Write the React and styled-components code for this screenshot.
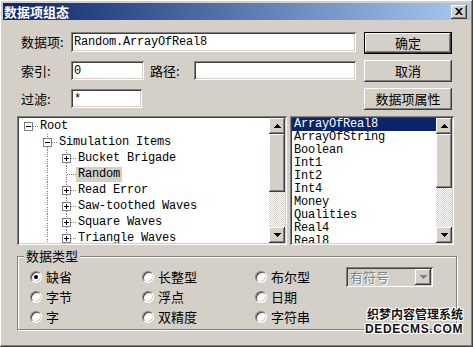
import React from "react";
import styled, { createGlobalStyle, css } from "styled-components";

const ui = `"Noto Sans CJK SC", "Liberation Sans", sans-serif`;
const mono = `"Liberation Mono", "Noto Sans CJK SC", monospace`;

const GlobalStyle = createGlobalStyle`
  html, body { margin: 0; padding: 0; background: #d4d0c8; }
  body { width: 473px; height: 347px; overflow: hidden; }
`;

const raised = css`
  background: #d4d0c8;
  box-shadow: inset -1px -1px #404040, inset 1px 1px #ffffff,
    inset -2px -2px #808080, inset 2px 2px #d4d0c8;
`;

const sunken = css`
  box-shadow: inset 1px 1px #808080, inset -1px -1px #ffffff,
    inset 2px 2px #404040, inset -2px -2px #d4d0c8;
`;

const Window = styled.div`
  position: relative;
  box-sizing: border-box;
  width: 473px;
  height: 347px;
  padding: 3px;
  display: flex;
  flex-direction: column;
  ${raised}
  font-family: ${ui};
  font-size: 13px;
  color: #000;
`;

const TitleBar = styled.div`
  height: 17px;
  display: flex;
  align-items: center;
  justify-content: space-between;
  padding: 0 3px 0 1px;
  background: linear-gradient(to right, #0a246a, #a6caf0);
  color: #fff;
  font-weight: bold;
  font-size: 13px;
  line-height: 17px;
`;

const CloseButton = styled.div`
  width: 16px;
  height: 14px;
  box-sizing: border-box;
  ${raised}
  display: flex;
  align-items: center;
  justify-content: center;
`;

const Body = styled.div`
  flex: 1;
  display: flex;
  flex-direction: column;
  padding: 12px 13px 0 14px;
`;

const TopSection = styled.div`
  display: flex;
  justify-content: space-between;
`;

const Fields = styled.div`
  width: 339px;
  display: flex;
  flex-direction: column;
  gap: 9px;
`;

const FieldRow = styled.div`
  display: flex;
  align-items: center;
  height: ${p => p.$h}px;
  padding-left: 4px;
`;

const Label = styled.span`
  width: ${p => p.$w}px;
  margin-left: ${p => p.$ml || 0}px;
  white-space: nowrap;
  line-height: 14px;
`;

const Input = styled.div`
  box-sizing: border-box;
  width: ${p => p.$w}px;
  height: 100%;
  background: #fff;
  ${sunken}
  padding: 0 3px;
  display: flex;
  align-items: center;
  font-family: ${mono};
  font-size: 12px;
  letter-spacing: -0.2px;
  white-space: nowrap;
`;

const Buttons = styled.div`
  display: flex;
  flex-direction: column;
  gap: 6px;
  margin-right: 5px;
`;

const Button = styled.div`
  box-sizing: border-box;
  width: 88px;
  height: 22px;
  ${raised}
  border: ${p => (p.$default ? "1px solid #000" : "none")};
  display: flex;
  align-items: center;
  justify-content: center;
  line-height: 14px;
`;

const Middle = styled.div`
  display: flex;
  gap: 3px;
  margin-top: 6px;
  height: 129px;
  margin-right: 3px;
`;

const TreeBox = styled.div`
  box-sizing: border-box;
  width: 270px;
  padding: 2px;
  background: #fff;
  ${sunken}
  display: flex;
`;

const TreeContent = styled.div`
  flex: 1;
  overflow: hidden;
  font-family: ${mono};
  font-size: 12px;
  letter-spacing: -0.2px;
`;

const TreeRow = styled.div`
  display: flex;
  align-items: center;
  height: 16px;
  white-space: nowrap;
`;

const TreeLabel = styled.span`
  padding: 0 2px;
  height: 15px;
  line-height: 15px;
  background: ${p => (p.$selected ? "#d4d0c8" : "transparent")};
`;

const ListBox = styled.div`
  box-sizing: border-box;
  flex: 1;
  padding: 2px;
  background: #fff;
  ${sunken}
  display: flex;
`;

const ListContent = styled.div`
  flex: 1;
  overflow: hidden;
  font-family: ${mono};
  font-size: 12px;
  letter-spacing: -0.2px;
`;

const ListItem = styled.div`
  height: 13px;
  line-height: 13px;
  padding-left: 2px;
  white-space: nowrap;
  background: ${p => (p.$selected ? "#0a246a" : "transparent")};
  color: ${p => (p.$selected ? "#fff" : "#000")};
`;

const ScrollBar = styled.div`
  width: 16px;
  display: flex;
  flex-direction: column;
`;

const ScrollButton = styled.div`
  box-sizing: border-box;
  width: 16px;
  height: 16px;
  ${raised}
  display: flex;
  align-items: center;
  justify-content: center;
`;

const Thumb = styled.div`
  height: ${p => p.$size}px;
  ${raised}
`;

const Track = styled.div`
  flex: 1;
  background-color: #fff;
  background-image: repeating-conic-gradient(#d4d0c8 0 25%, #fff 0 50%);
  background-size: 2px 2px;
`;

const Group = styled.fieldset`
  box-sizing: border-box;
  margin: 4px 0 0 0;
  width: 440px;
  padding: 4px 0 2px 6px;
  border: 1px solid #808080;
  box-shadow: 1px 1px 0 #fff, inset 1px 1px 0 #fff;
  min-inline-size: 0;
`;

const Legend = styled.legend`
  padding: 0 2px;
  line-height: 14px;
  background: #d4d0c8;
`;

const RadioGrid = styled.div`
  margin-left: 6px;
  display: grid;
  grid-template-columns: 112px 113px 91px auto;
  grid-auto-rows: 20px;
  align-items: center;
`;

const RadioItem = styled.div`
  display: flex;
  align-items: center;
  gap: 4px;
  line-height: 14px;
  grid-column: ${p => p.$col};
  grid-row: ${p => p.$row};
`;

const RadioCircle = styled.span`
  width: 12px;
  height: 12px;
  box-sizing: border-box;
  border-radius: 50%;
  background: #fff;
  border: 1px solid;
  border-color: #808080 #fff #fff #808080;
  box-shadow: inset 1px 1px #404040, inset -1px -1px #d4d0c8;
  display: flex;
  align-items: center;
  justify-content: center;
  &::after {
    content: "";
    width: 4px;
    height: 4px;
    border-radius: 50%;
    background: #000;
    display: ${p => (p.$checked ? "block" : "none")};
  }
`;

const Combo = styled.div`
  grid-column: 4;
  grid-row: 1;
  box-sizing: border-box;
  width: 87px;
  height: 20px;
  padding: 2px;
  background: #d4d0c8;
  ${sunken}
  display: flex;
  align-items: center;
  justify-content: space-between;
`;

const ComboText = styled.span`
  padding-left: 2px;
  color: #808080;
  text-shadow: 1px 1px 0 #fff;
  line-height: 14px;
`;

const Watermark = styled.div`
  position: absolute;
  right: 10px;
  bottom: 10px;
  display: flex;
  flex-direction: column;
  align-items: flex-end;
  font-weight: bold;
  color: #111;
  text-shadow: 1px 0 #fff, -1px 0 #fff, 0 1px #fff, 0 -1px #fff,
    1px 1px #fff, -1px -1px #fff, 1px -1px #fff, -1px 1px #fff;
`;

const MarkCn = styled.span`
  font-family: ${ui};
  font-size: 12px;
  line-height: 16px;
`;

const MarkEn = styled.span`
  font-family: "Liberation Sans", sans-serif;
  font-size: 12px;
  letter-spacing: 0.6px;
  line-height: 15px;
`;

const Arrow = ({ down, color = "#000" }) => (
  <svg width="7" height="4" viewBox="0 0 7 4" style={down ? { transform: "scaleY(-1)" } : undefined}>
    <path d="M3 0h1v1h1v1h1v1h1v1H0V3h1V2h1V1h1z" fill={color} />
  </svg>
);

const CloseIcon = () => (
  <svg width="8" height="7" viewBox="0 0 8 7">
    <path d="M0 0h2l2 2 2-2h2L5 3.5 8 7H6L4 5 2 7H0l3-3.5z" fill="#000" />
  </svg>
);

// one 19x16 cell of tree connector lines (and the +/- box)
const TreeCell = ({ up, down, across, box }) => (
  <svg width="19" height="16" viewBox="0 0 19 16" shapeRendering="crispEdges" style={{ flex: "none" }}>
    {up && <line x1="9.5" y1="0" x2="9.5" y2="8" stroke="#808080" strokeDasharray="1 1" />}
    {down && <line x1="9.5" y1="9" x2="9.5" y2="16" stroke="#808080" strokeDasharray="1 1" />}
    {across && <line x1="10" y1="8.5" x2="19" y2="8.5" stroke="#808080" strokeDasharray="1 1" />}
    {box && (
      <>
        <rect x="5.5" y="4.5" width="8" height="8" fill="#fff" stroke="#808080" />
        <line x1="7" y1="8.5" x2="12" y2="8.5" stroke="#000" />
        {box === "plus" && <line x1="9.5" y1="6" x2="9.5" y2="11" stroke="#000" />}
      </>
    )}
  </svg>
);

const treeItems = [
  { label: "Root", level: 0, box: "minus", guides: [], first: true, next: false },
  { label: "Simulation Items", level: 1, box: "minus", guides: [false], next: true },
  { label: "Bucket Brigade", level: 2, box: "plus", guides: [false, true], next: true },
  { label: "Random", level: 2, guides: [false, true], next: true, selected: true },
  { label: "Read Error", level: 2, box: "plus", guides: [false, true], next: true },
  { label: "Saw-toothed Waves", level: 2, box: "plus", guides: [false, true], next: true },
  { label: "Square Waves", level: 2, box: "plus", guides: [false, true], next: true },
  { label: "Triangle Waves", level: 2, box: "plus", guides: [false, true], next: true },
];

const listItems = [
  "ArrayOfReal8", "ArrayOfString", "Boolean", "Int1", "Int2", "Int4",
  "Money", "Qualities", "Real4", "Real8",
];

const radios = [
  { label: "缺省", col: 1, row: 1, checked: true },
  { label: "字节", col: 1, row: 2 },
  { label: "字", col: 1, row: 3 },
  { label: "长整型", col: 2, row: 1 },
  { label: "浮点", col: 2, row: 2 },
  { label: "双精度", col: 2, row: 3 },
  { label: "布尔型", col: 3, row: 1 },
  { label: "日期", col: 3, row: 2 },
  { label: "字符串", col: 3, row: 3 },
];

const VScroll = ({ thumb }) => (
  <ScrollBar>
    <ScrollButton><Arrow /></ScrollButton>
    <Thumb $size={thumb} />
    <Track />
    <ScrollButton><Arrow down /></ScrollButton>
  </ScrollBar>
);

const App = () => (
  <>
    <GlobalStyle />
    <Window>
      <TitleBar>
        <span>数据项组态</span>
        <CloseButton><CloseIcon /></CloseButton>
      </TitleBar>
      <Body>
        <TopSection>
          <Fields>
            <FieldRow $h={20}>
              <Label $w={50}>数据项:</Label>
              <Input $w={285}>Random.ArrayOfReal8</Input>
            </FieldRow>
            <FieldRow $h={19}>
              <Label $w={50}>索引:</Label>
              <Input $w={73}>0</Input>
              <Label $w={44} $ml={6}>路径:</Label>
              <Input $w={162} />
            </FieldRow>
            <FieldRow $h={19}>
              <Label $w={50}>过滤:</Label>
              <Input $w={71}>*</Input>
            </FieldRow>
          </Fields>
          <Buttons>
            <Button $default>确定</Button>
            <Button>取消</Button>
            <Button>数据项属性</Button>
          </Buttons>
        </TopSection>

        <Middle>
          <TreeBox>
            <TreeContent>
              {treeItems.map(item => (
                <TreeRow key={item.label}>
                  {item.guides.map((g, i) => (
                    <TreeCell key={i} up={g} down={g} />
                  ))}
                  <TreeCell up={!item.first} down={item.next} across box={item.box} />
                  <TreeLabel $selected={item.selected}>{item.label}</TreeLabel>
                </TreeRow>
              ))}
            </TreeContent>
            <VScroll thumb={58} />
          </TreeBox>
          <ListBox>
            <ListContent>
              {listItems.map((name, i) => (
                <ListItem key={name} $selected={i === 0}>{name}</ListItem>
              ))}
            </ListContent>
            <VScroll thumb={54} />
          </ListBox>
        </Middle>

        <Group>
          <Legend>数据类型</Legend>
          <RadioGrid>
            {radios.map(r => (
              <RadioItem key={r.label} $col={r.col} $row={r.row}>
                <RadioCircle $checked={r.checked} />
                {r.label}
              </RadioItem>
            ))}
            <Combo>
              <ComboText>有符号</ComboText>
              <ScrollButton><Arrow down color="#808080" /></ScrollButton>
            </Combo>
          </RadioGrid>
        </Group>
      </Body>
      <Watermark>
        <MarkCn>织梦内容管理系统</MarkCn>
        <MarkEn>DEDECMS.COM</MarkEn>
      </Watermark>
    </Window>
  </>
);

export default App;
